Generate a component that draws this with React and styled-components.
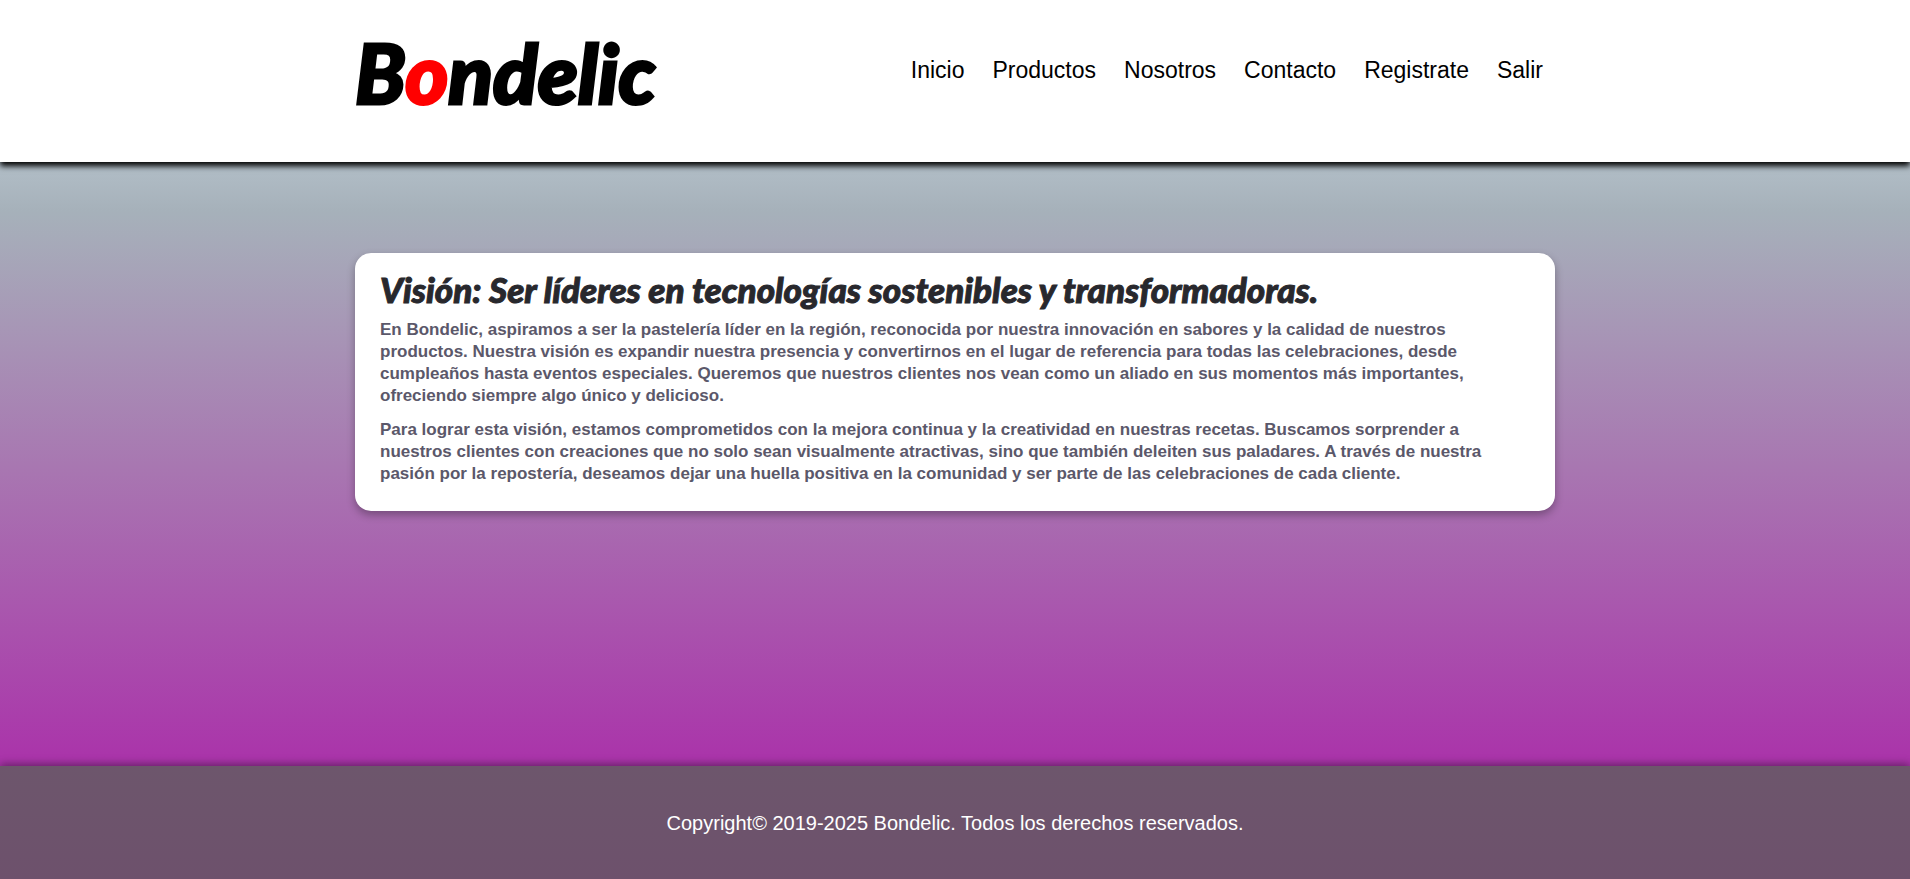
import React from "react";
import styled, { createGlobalStyle } from "styled-components";

const GlobalStyle = createGlobalStyle`
  *, *::before, *::after { box-sizing: border-box; }
  body {
    margin: 0;
    font-family: "Liberation Sans", Arial, sans-serif;
  }
`;

const Page = styled.div`
  min-height: 100vh;
  display: flex;
  flex-direction: column;
  background: linear-gradient(to bottom, #b7c4cd 16%, #a6b1ba 24%, #a877b1 53%, #aa35aa 86%, #a82fa8 100%);
`;

const Header = styled.header`
  background: #fff;
  box-shadow: 0 4px 6px #000;
  min-height: 162px;
  padding: 32px 24px;
`;

const HeaderInner = styled.div`
  max-width: 1200px;
  margin: 0 auto;
  display: flex;
  justify-content: space-between;
  align-items: flex-start;
  flex-wrap: wrap;
`;

const Logo = styled.a`
  font-family: Lato, "Liberation Sans", sans-serif;
  font-size: 82px;
  line-height: 80px;
  font-weight: 900;
  font-style: italic;
  color: #000;
  text-decoration: none;
  -webkit-text-stroke: 3px currentColor;
`;

const LogoAccent = styled.span`
  color: #f00;
`;

const NavList = styled.ul`
  list-style: none;
  margin: 0;
  padding: 24px 12px 0 0;
  display: flex;
  flex-wrap: wrap;
  gap: 28px;
`;

const NavLink = styled.a`
  font-size: 23px;
  line-height: 28px;
  color: #000;
  text-decoration: none;
`;

const Main = styled.main`
  flex: 1;
  padding: 91px 24px 24px;
`;

const Card = styled.article`
  max-width: 1200px;
  margin: 0 auto;
  padding: 16px 25px 26px;
  background: #fff;
  border-radius: 16px;
  box-shadow: 0 4px 8px rgba(0, 0, 0, 0.3);
`;

const Title = styled.h1`
  margin: 0 0 10px;
  font-family: Lato, "Liberation Sans", sans-serif;
  font-size: 35px;
  line-height: 40px;
  font-weight: 900;
  font-style: italic;
  color: #28282d;
  -webkit-text-stroke: 1px currentColor;
`;

const Paragraph = styled.p`
  margin: 0;
  font-size: 17px;
  line-height: 22px;
  font-weight: 700;
  color: #5b586a;

  & + & { margin-top: 12px; }
`;

const Footer = styled.footer`
  background: linear-gradient(to bottom, #6d566c, #6d516c);
  box-shadow: 0 -2px 8px rgba(0, 0, 0, 0.4);
  padding: 45px 24px 44px;
  text-align: center;
`;

const Copyright = styled.p`
  margin: 0;
  font-size: 20px;
  line-height: 24px;
  color: #fff;
`;

const links = ["Inicio", "Productos", "Nosotros", "Contacto", "Registrate", "Salir"];

export default function App() {
  return (
    <>
      <GlobalStyle />
      <Page>
        <Header>
          <HeaderInner>
            <Logo href="#inicio">B<LogoAccent>o</LogoAccent>ndelic</Logo>
            <nav>
              <NavList>
                {links.map((link) => (
                  <li key={link}>
                    <NavLink href={`#${link.toLowerCase()}`}>{link}</NavLink>
                  </li>
                ))}
              </NavList>
            </nav>
          </HeaderInner>
        </Header>
        <Main>
          <Card>
            <Title>Visión: Ser líderes en tecnologías sostenibles y transformadoras.</Title>
            <Paragraph>
              En Bondelic, aspiramos a ser la pastelería líder en la región, reconocida por nuestra innovación en
              sabores y la calidad de nuestros productos. Nuestra visión es expandir nuestra presencia y convertirnos
              en el lugar de referencia para todas las celebraciones, desde cumpleaños hasta eventos especiales.
              Queremos que nuestros clientes nos vean como un aliado en sus momentos más importantes, ofreciendo
              siempre algo único y delicioso.
            </Paragraph>
            <Paragraph>
              Para lograr esta visión, estamos comprometidos con la mejora continua y la creatividad en nuestras
              recetas. Buscamos sorprender a nuestros clientes con creaciones que no solo sean visualmente atractivas,
              sino que también deleiten sus paladares. A través de nuestra pasión por la repostería, deseamos dejar
              una huella positiva en la comunidad y ser parte de las celebraciones de cada cliente.
            </Paragraph>
          </Card>
        </Main>
        <Footer>
          <Copyright>Copyright© 2019-2025 Bondelic. Todos los derechos reservados.</Copyright>
        </Footer>
      </Page>
    </>
  );
}
